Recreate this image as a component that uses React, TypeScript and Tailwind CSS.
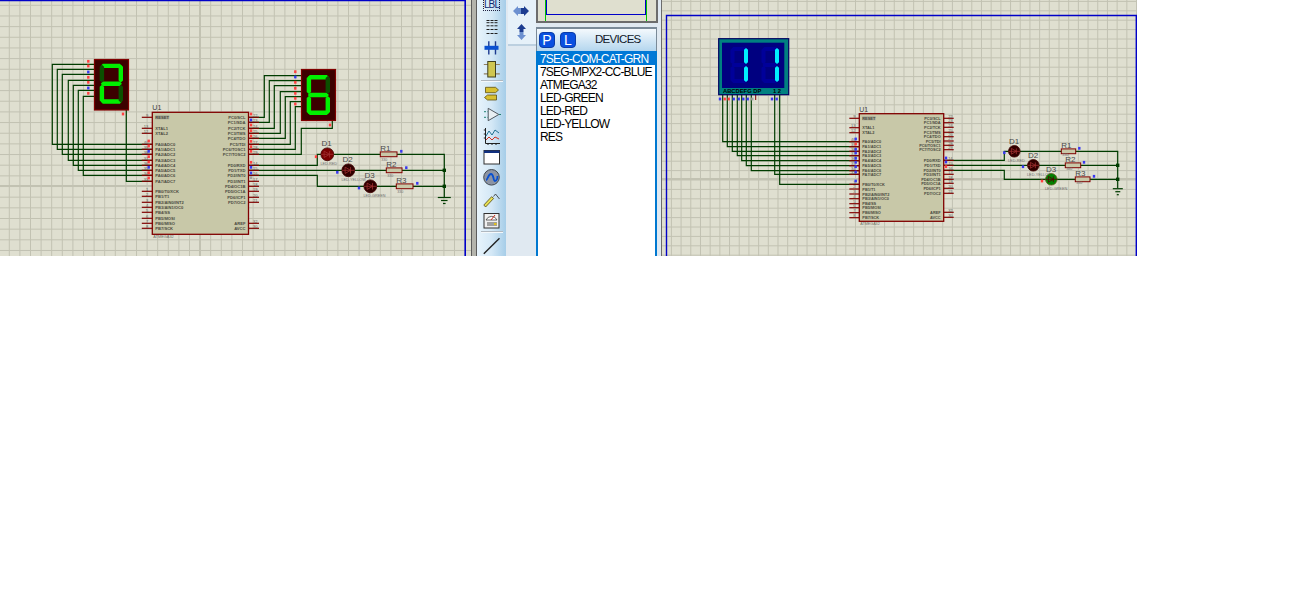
const SANS = "font-['Liberation_Sans',Arial,sans-serif]";
const WIRE = "#003c00";
const STUB = "#800000";

type Pin = [string, string, number];

const range = (from: number, to: number, step: number) => {
  const out: number[] = [];
  for (let v = from; v <= to; v += step) out.push(v);
  return out;
};

function Grid({ xs, ys, x0, x1 }: { xs: number[]; ys: number[]; x0: number; x1: number }) {
  return (
    <g>
      {xs.map((x) => (
        <line key={x} x1={x} x2={x} y1={0} y2={256} stroke="#c2c2b2" strokeWidth={1} />
      ))}
      {ys.map((y) => (
        <line key={y} y1={y} y2={y} x1={x0} x2={x1} stroke="#c2c2b2" strokeWidth={1} />
      ))}
    </g>
  );
}

function Wires({ paths }: { paths: string[] }) {
  return (
    <g fill="none" stroke={WIRE} strokeWidth={1.2}>
      {paths.map((d) => (
        <path key={d} d={d} />
      ))}
    </g>
  );
}

function Marks({ items }: { items: [number, number, string][] }) {
  const colors: Record<string, string> = { r: "#ff4040", b: "#3838f0", g: "#a0a0a0" };
  return (
    <g>
      {items.map(([x, y, c]) => (
        <rect key={`${x}-${y}`} x={x - 1.2} y={y - 1.4} width={2.4} height={2.8} fill={colors[c]} />
      ))}
    </g>
  );
}

function Chip({ x, y, w, h, stub, left, right, fs }: { x: number; y: number; w: number; h: number; stub: number; left: Pin[]; right: Pin[]; fs: number }) {
  return (
    <g className={SANS}>
      {left.map(([, , py]) => (
        <line key={py} x1={x - stub} x2={x} y1={py} y2={py} stroke={STUB} strokeWidth={1.2} />
      ))}
      {right.map(([, , py]) => (
        <line key={py} x1={x + w} x2={x + w + stub} y1={py} y2={py} stroke={STUB} strokeWidth={1.2} />
      ))}
      <rect x={x} y={y} width={w} height={h} fill="#c8c8a8" stroke={STUB} strokeWidth={1.3} />
      <rect x={x + 3} y={left[0][2] - 2} width={fs * 3.4} height={4} fill="#a8a898" />
      <text x={x} y={y - 2} fontSize={fs + 3} fill="#404040">U1</text>
      <text x={x + 1} y={y + h + 3.6} fontSize={fs - 0.2} fill="#707068">ATMEGA32</text>
      {left.map(([label, num, py]) => (
        <g key={label} fontSize={fs} fontWeight={700} fill="#4a4a40">
          <text x={x + 3} y={py + 1.6}>{label}</text>
          <text x={x - 4} y={py - 0.6} textAnchor="end" fontWeight={400} fill="#606058">{num}</text>
        </g>
      ))}
      {right.map(([label, num, py]) => (
        <g key={label} fontSize={fs} fontWeight={700} fill="#4a4a40">
          <text x={x + w - 3} y={py + 1.6} textAnchor="end">{label}</text>
          <text x={x + w + 4.5} y={py - 0.6} fontWeight={400} fill="#606058">{num}</text>
        </g>
      ))}
    </g>
  );
}

function Led({ x, y, r, fill, label, name }: { x: number; y: number; r: number; fill: string; label: string; name: string }) {
  const s = r * 0.5;
  return (
    <g className={SANS}>
      <circle cx={x} cy={y} r={r} fill={fill} stroke={fill === "#008000" ? "#606020" : "#400000"} strokeWidth={0.8} />
      <path d={`M${x - s} ${y - s}L${x + s * 0.7} ${y}L${x - s} ${y + s}Z M${x + s * 0.7} ${y - s}V${y + s} M${x - r} ${y}H${x + r}`} fill="none" stroke={fill === "#008000" ? "#500000" : "#a03030"} strokeWidth={0.8} />
      <text x={x - r + 0.5} y={y - r - 1.6} fontSize={8} fill="#484848">{name}</text>
      <text x={x - r - 0.5} y={y + r + 4.5} fontSize={3.8} fill="#707070">{label}</text>
    </g>
  );
}

function Res({ x, y, w, name, low }: { x: number; y: number; w: number; name: string; low: number }) {
  return (
    <g className={SANS}>
      <rect x={x} y={y - 2.4} width={w} height={4.8} fill="#c8c8a8" stroke={STUB} strokeWidth={1} />
      <text x={x} y={y - 3.2} fontSize={8} fill="#484848">{name}</text>
      <text x={x + 1} y={y + low} fontSize={3.6} fill="#707070">330</text>
    </g>
  );
}

function Ground({ x, y, w }: { x: number; y: number; w: number }) {
  return (
    <g stroke={WIRE} strokeWidth={1.2}>
      <line x1={x - w} x2={x + w} y1={y} y2={y} />
      <line x1={x - w * 0.5} x2={x + w * 0.5} y1={y + 3} y2={y + 3} />
      <line x1={x - w * 0.2} x2={x + w * 0.2} y1={y + 6} y2={y + 6} />
    </g>
  );
}

// seven segment glyph, segments a-g keyed by letter
function Seg({ x, y, w, h, t, on, lit, off }: { x: number; y: number; w: number; h: number; t: number; on: string; lit: string; off: string }) {
  const mid = y + h / 2;
  const i = t * 0.7;
  const p = t * 0.25;
  const bar = (top: number) =>
    `M${x + i} ${top}H${x + w - i}L${x + w - p} ${top + t / 2}L${x + w - i} ${top + t}H${x + i}L${x + p} ${top + t / 2}Z`;
  const post = (lx: number, from: number, to: number) =>
    `M${lx} ${from + i}L${lx + t / 2} ${from + p}L${lx + t} ${from + i}V${to - i}L${lx + t / 2} ${to - p}L${lx} ${to - i}Z`;
  const segs: Record<string, string> = {
    a: bar(y),
    g: bar(mid - t / 2),
    d: bar(y + h - t),
    f: post(x, y, mid),
    b: post(x + w - t, y, mid),
    e: post(x, mid, y + h),
    c: post(x + w - t, mid, y + h),
  };
  return (
    <g>
      {Object.keys(segs).map((k) => (
        <path key={k} d={segs[k]} fill={on.includes(k) ? lit : off} />
      ))}
    </g>
  );
}

const leftChipLeft: Pin[] = [
  ["RESET", "9", 117.3], ["XTAL1", "13", 128.3], ["XTAL2", "12", 133.3],
  ["PA0/ADC0", "40", 144.3], ["PA1/ADC1", "39", 149.3], ["PA2/ADC2", "38", 154.3], ["PA3/ADC3", "37", 160.3],
  ["PA4/ADC4", "36", 165.3], ["PA5/ADC5", "35", 170.3], ["PA6/ADC6", "34", 175.3], ["PA7/ADC7", "33", 181.3],
  ["PB0/T0/XCK", "1", 191.3], ["PB1/T1", "2", 196.3], ["PB2/AIN0/INT2", "3", 202.3], ["PB3/AIN1/OC0", "4", 207.3],
  ["PB4/SS", "5", 212.3], ["PB5/MOSI", "6", 218.3], ["PB6/MISO", "7", 223.3], ["PB7/SCK", "8", 228.3],
];
const leftChipRight: Pin[] = [
  ["PC0/SCL", "22", 117.3], ["PC1/SDA", "23", 122.3], ["PC2/TCK", "24", 128.3], ["PC3/TMS", "25", 133.3],
  ["PC4/TDO", "26", 138.3], ["PC5/TDI", "27", 144.3], ["PC6/TOSC1", "28", 149.3], ["PC7/TOSC2", "29", 154.3],
  ["PD0/RXD", "14", 165.3], ["PD1/TXD", "15", 170.3], ["PD2/INT0", "16", 175.3], ["PD3/INT1", "17", 181.3],
  ["PD4/OC1B", "18", 186.3], ["PD5/OC1A", "19", 191.3], ["PD6/ICP1", "20", 197.3], ["PD7/OC2", "21", 202.3],
  ["AREF", "32", 223.3], ["AVCC", "30", 228.3],
];
const rightChipLeftY = [118.3, 127.7, 132.7, 141.7, 146.7, 151.3, 155.7, 160.7, 165.7, 170.7, 174.3, 184.3, 189, 194, 198.7, 203.7, 207.7, 212.7, 217.7];
const rightChipRightY = [118.3, 122.7, 127.3, 132.3, 136.7, 141, 145.3, 149.7, 160.3, 165.3, 170.3, 174.3, 179.3, 183.3, 188.3, 193.3, 212.3, 217.3];
const rightChipLeft: Pin[] = leftChipLeft.map(([l, n], i) => [l, n, rightChipLeftY[i]]);
const rightChipRight: Pin[] = leftChipRight.map(([l, n], i) => [l, n, rightChipRightY[i]]);

function LeftSchematic() {
  const d1X = [52.3, 57.3, 62.3, 68.3, 73.3, 78.3, 83.3];
  const d1Top = [64.3, 69.3, 74.3, 80.3, 85.3, 90.3, 96.3];
  const d1Bot = [144.3, 149.3, 154.3, 160.3, 165.3, 170.3, 175.3];
  const d2X = [264.3, 269.3, 274.3, 280.3, 285.3, 290.3, 295.3];
  const d2Top = [75.7, 80.7, 85.7, 91.7, 96.7, 101.7, 106.7];
  const d2Bot = [117.3, 122.3, 128.3, 133.3, 138.3, 144.3, 149.3];
  return (
    <svg viewBox="0 0 471 256" className="w-[471px] h-[256px] block">
      <Grid xs={range(9.3, 465, 10.6)} ys={range(5.3, 256, 10.66)} x0={0} x1={471} />
      <line x1={200} x2={200} y1={0} y2={256} stroke="#c2c2b2" strokeWidth={2} />
      <line y1={186} y2={186} x1={0} x2={471} stroke="#c2c2b2" strokeWidth={2} />
      <path d="M0 0.5H465.2V256" fill="none" stroke="#0000c8" strokeWidth={1.6} />
      <Wires
        paths={[
          ...d1X.map((x, i) => `M94 ${d1Top[i]}H${x}V${d1Bot[i]}H152`),
          "M126.3 110V181.3H152",
          ...d2X.map((x, i) => `M301 ${d2Top[i]}H${x}V${d2Bot[i]}H249`),
          "M332.3 120.7V128.3H301.3V154.3H249",
          "M249 165.3H317.3V154.3H444.3V197",
          "M249 170.3H444.3",
          "M249 175.3H317.3V186.3H444.3",
        ]}
      />
      <rect x={94.5} y={59.5} width={34} height={50.5} fill="#3c0000" stroke={STUB} strokeWidth={1.2} />
      <Seg x={99.7} y={63.7} w={23.3} h={40} t={4.4} on="abged" lit="#00f000" off="#0c5000" />
      <rect x={301.5} y={69.5} width={34} height={51} fill="#3c0000" stroke={STUB} strokeWidth={1.2} />
      <Seg x={306.7} y={75} w={23.3} h={40} t={4.4} on="afgedc" lit="#00f000" off="#0c5000" />
      <Chip x={152.3} y={112.3} w={96.2} h={122} stub={10.5} left={leftChipLeft} right={leftChipRight} fs={4.1} />
      <Res x={380.3} y={154.3} w={16.7} name="R1" low={6.5} />
      <Res x={386.3} y={170.3} w={15.7} name="R2" low={6.5} />
      <Res x={396.3} y={186.3} w={16.7} name="R3" low={6.5} />
      <Led x={327.3} y={154.3} r={6.4} fill="#7a0000" name="D1" label="LED-RED" />
      <Led x={348.3} y={170.3} r={6.4} fill="#300000" name="D2" label="LED-YELLOW" />
      <Led x={370.3} y={186.3} r={6.4} fill="#300000" name="D3" label="LED-GREEN" />
      <rect x={442.6} y={168.6} width={3.4} height={3.4} fill={WIRE} />
      <rect x={442.6} y={184.6} width={3.4} height={3.4} fill={WIRE} />
      <Ground x={444.3} y={197.5} w={6.5} />
      <Marks
        items={[
          [88.3, 61.3, "r"], [88.3, 66, "r"], [88.3, 72, "b"], [88.3, 77.3, "r"], [88.3, 82.3, "r"], [88.3, 88, "b"], [88.3, 93.3, "r"], [123, 114, "r"],
          [148.7, 141, "r"], [148.7, 146, "r"], [148.7, 151.3, "b"], [148.7, 156.7, "r"], [148.7, 162, "r"], [148.7, 167.3, "b"], [148.7, 172.7, "r"], [148.7, 178, "r"],
          [251, 114, "r"], [251, 120, "b"], [251, 125, "r"], [251, 130.7, "r"], [251, 136, "r"], [251, 141.3, "r"], [251, 146.7, "r"], [251, 151.3, "r"],
          [251, 162.3, "r"], [251, 167.3, "b"], [251, 173, "b"], [251, 177.7, "g"],
          [295.3, 71.7, "r"], [295.3, 77, "b"], [295.3, 82.3, "r"], [295.3, 88.3, "r"], [295.3, 93.3, "r"], [295.3, 98.3, "r"], [295.3, 104, "r"], [330, 125, "r"],
          [316, 156.7, "r"], [337.3, 172.3, "b"], [359, 188, "b"], [401.3, 151.3, "b"], [406.3, 167.7, "b"], [417.3, 183.3, "b"],
        ]}
      />
    </svg>
  );
}

function RightSchematic() {
  const xs = [722.7, 727.3, 732.3, 737.3, 741.7, 746.3, 751.3, 774.7, 779.7];
  const ys = [141.7, 146.7, 151.3, 155.7, 160.7, 165.7, 170.7, 174.3, 184.3];
  return (
    <svg viewBox="662 0 475 256" className="w-[475px] h-[256px] block">
      <Grid xs={range(671.4, 1137, 9.69)} ys={range(1.4, 256, 9.4)} x0={662} x1={1137} />
      <line y1={179} y2={179} x1={662} x2={1137} stroke="#c2c2b2" strokeWidth={2} />
      <path d="M666.5 256V15.5H1136.3V256" fill="none" stroke="#0000c8" strokeWidth={1.4} />
      <Wires
        paths={[
          ...xs.map((x, i) => `M${x} 94V${ys[i]}H860`),
          "M943 160.3H1004.3V151.3H1117.7V188",
          "M943 165.3H1117.7",
          "M943 170.3H1004.3V179.3H1117.7",
        ]}
      />
      <line x1={755.7} x2={755.7} y1={94} y2={100} stroke={STUB} />
      <rect x={718.7} y={38.7} width={70} height={56} fill="#008080" stroke="#000060" strokeWidth={1.2} />
      <rect x={722} y={42.7} width={62.3} height={45.3} fill="#000080" />
      <Seg x={730.5} y={47} w={17.5} h={36} t={4} on="bc" lit="#00f0ff" off="#00009a" />
      <Seg x={761.5} y={47} w={17.5} h={36} t={4} on="bc" lit="#00f0ff" off="#00009a" />
      <text x={723} y={93} fontSize={5.8} fontWeight={700} fill="#000000" className={SANS}>ABCDEFG DP</text>
      <text x={773} y={93} fontSize={5.8} fontWeight={700} fill="#000000" className={SANS}>1 2</text>
      <Chip x={859.3} y={113.7} w={84.4} h={107.6} stub={10} left={rightChipLeft} right={rightChipRight} fs={3.9} />
      <Res x={1061.3} y={151.3} w={14.4} name="R1" low={5} />
      <Res x={1065.3} y={165.3} w={15.4} name="R2" low={5} />
      <Res x={1075.3} y={179.3} w={14.7} name="R3" low={5} />
      <Led x={1014.3} y={151.3} r={5.8} fill="#300000" name="D1" label="LED-RED" />
      <Led x={1033.3} y={165.3} r={5.8} fill="#300000" name="D2" label="LED-YELLOW" />
      <Led x={1051.3} y={179.3} r={5.8} fill="#008000" name="D3" label="LED-GREEN" />
      <rect x={1116} y={163.6} width={3.4} height={3.4} fill={WIRE} />
      <rect x={1116} y={177.6} width={3.4} height={3.4} fill={WIRE} />
      <Ground x={1117.8} y={188.7} w={5} />
      <Marks
        items={[
          [720, 99, "b"], [724.7, 99, "r"], [728.7, 99, "r"], [733.7, 99, "b"], [738.7, 99, "b"], [743.3, 99, "b"], [747.7, 99, "b"], [752.3, 99, "g"], [772, 99, "b"], [776.7, 99, "b"],
          [855.7, 139, "b"], [855.7, 144, "r"], [855.7, 149.3, "b"], [855.7, 153, "b"], [855.7, 158.3, "b"], [855.7, 162.3, "b"], [855.7, 166.7, "b"], [855.7, 172, "b"], [855.7, 181, "b"],
          [946, 158, "b"], [946, 162, "b"], [946, 166.7, "r"],
          [1004.3, 152.7, "b"], [1023, 166.7, "b"], [1042, 181, "r"], [1079.3, 148.3, "b"], [1084, 162.3, "b"], [1094, 176.3, "b"],
        ]}
      />
    </svg>
  );
}

function ToolIcon({ children }: { children: React.ReactNode }) {
  return (
    <svg viewBox="0 0 24 21" className="w-6 h-[21px] shrink-0">
      {children}
    </svg>
  );
}

function Separator() {
  return <div className="w-[22px] h-[2px] my-[1.25px] shrink-0 bg-[#f4f8fb] border-t border-[#b0b8c0]" />;
}

function Toolbar() {
  return (
    <div className="w-[29px] h-full shrink-0 flex flex-col items-center bg-gradient-to-r from-[#e8f4fc] via-[#d4e8f6] to-[#a6cde8] overflow-hidden">
      <div className="mt-[-5px] mb-[4.5px] w-[17px] h-4 shrink-0 border border-dotted border-[#202040] flex items-end justify-center text-[10px] leading-[10px] tracking-[-0.9px] text-[#102870] font-['Liberation_Sans',Arial,sans-serif]">
        LBL
      </div>
      <ToolIcon>
        <path d="M6.500 4.500h11M6.500 6.700h11M6.500 9.800h11M6.500 13.500h11M6.500 17.500h11" stroke="#202020" strokeWidth={1} strokeDasharray="3 1" />
      </ToolIcon>
      <ToolIcon>
        <path d="M8.800 4.200v13.300M15.500 4.200v13.300" stroke="#1c3a90" strokeWidth={1.4} />
        <rect x={4.500} y={8.800} width={14} height={4} fill="#0a50d0" />
      </ToolIcon>
      <ToolIcon>
        <path d="M3.800 6.500h16M3.800 15.800h16" stroke="#908060" strokeWidth={1.2} />
        <rect x={7.800} y={3.500} width={7.700} height={15.500} fill="#cfc650" stroke="#404020" />
      </ToolIcon>
      <Separator />
      <ToolIcon>
        <path d="M5.500 4.300h10l3 2.700-3 2.700h-10zM7.500 12h9v5h-9l-3-2.500z" fill="#d8c030" stroke="#605010" strokeWidth={0.8} />
      </ToolIcon>
      <ToolIcon>
        <path d="M8.200 4.300v12.400l10.600-6.200z" fill="#e8eef2" stroke="#505860" strokeWidth={1} />
        <path d="M4 7.700h3.500M4 13.300h3.500M19 10.500h3" stroke="#208070" strokeWidth={1} strokeDasharray="2 1" />
      </ToolIcon>
      <ToolIcon>
        <path d="M5.500 3v15.500h14.500M3.800 5h2M3.800 9h2M3.800 13h2M8 18v2M12 18v2M16 18v2" stroke="#202020" strokeWidth={1} fill="none" />
        <path d="M6 11l3-5 3 4 3-5 4 3" stroke="#207090" strokeWidth={1} fill="none" />
        <path d="M6 15l3-3 3 3 3-3 4 2" stroke="#d03020" strokeWidth={1} fill="none" />
      </ToolIcon>
      <ToolIcon>
        <rect x={4} y={4.500} width={15.500} height={13.500} fill="#ffffff" stroke="#303030" />
        <rect x={4} y={4.500} width={15.500} height={2.500} fill="#103080" />
      </ToolIcon>
      <ToolIcon>
        <circle cx={11.500} cy={10.300} r={7.800} fill="#8c94a4" stroke="#404850" />
        <path d="M6 13c2 0 2-6 5-6s2 7 4 7 2.500-4 2.500-5" fill="none" stroke="#0850d0" strokeWidth={1.8} />
      </ToolIcon>
      <ToolIcon>
        <path d="M3.800 17l1.800 2 8-8.500-2-1.800z" fill="#e8e050" stroke="#504818" strokeWidth={0.8} />
        <path d="M13.500 8.500l2-2.500 4 5" fill="none" stroke="#303030" strokeWidth={0.8} />
      </ToolIcon>
      <ToolIcon>
        <rect x={4} y={4.500} width={15} height={14.500} fill="#f0f0f0" stroke="#303030" />
        <path d="M6 11a6 6 0 0 1 11 0z" fill="#ffffff" stroke="#404040" strokeWidth={0.8} />
        <path d="M11 11l4-5" stroke="#d03020" />
        <rect x={7} y={13} width={10} height={4} fill="#a0a0a0" />
        <rect x={14} y={14} width={2.500} height={2} fill="#e0c020" />
      </ToolIcon>
      <Separator />
      <ToolIcon>
        <path d="M3.800 18.700L19.500 3.300" stroke="#202020" strokeWidth={1.4} />
      </ToolIcon>
    </div>
  );
}

function ModeColumn() {
  return (
    <div className="w-[30px] h-full shrink-0 bg-[#e0e9f1] flex flex-col">
      <div className="h-[46px] ml-[2px] shrink-0 bg-[#e6f1f9] border-b-2 border-[#bcd0e0] flex flex-col items-center pt-[5.500px] pr-[2px] gap-2">
        <svg viewBox="0 0 16 10" className="w-4 h-[10px]">
          <path d="M8 2H5V0L0 5l5 5V8h3z" fill="#6c90d0" />
          <path d="M8 2h3V0l5 5-5 5V8H8z" fill="#1c3c90" />
        </svg>
        <svg viewBox="0 0 9 16" className="w-[9px] h-4">
          <path d="M2.500 8V5H0L4.500 0 9 5H6.500V8z" fill="#1c3c90" />
          <path d="M2.500 8v3H0l4.500 5L9 11H6.500V8z" fill="#6c90d0" />
        </svg>
      </div>
    </div>
  );
}

function LogoButton({ label }: { label: string }) {
  return (
    <div className="w-4 h-4 rounded-[4px] bg-[#0a50e0] text-white text-[14px] leading-none flex items-center justify-center border border-[#0a3ca8]">
      {label}
    </div>
  );
}

function DevicesPanel() {
  const devices = ["7SEG-COM-CAT-GRN", "7SEG-MPX2-CC-BLUE", "ATMEGA32", "LED-GREEN", "LED-RED", "LED-YELLOW", "RES"];
  return (
    <div className={`w-[122px] h-full shrink-0 flex flex-col bg-[#e0e9f1] ${SANS}`}>
      <div className="h-[23px] shrink-0 bg-[#dfdfcf] border-x-2 border-b-2 border-[#6c6c6c] flex">
        <div className="ml-[7px] w-[102px] h-[21px] border-x border-[#00c000]">
          <div className="h-[15px] border-x border-b border-[#0000c8]" />
        </div>
      </div>
      <div className="h-[4px] shrink-0" />
      <div className="flex-1 mr-[1px] flex flex-col border-t-2 border-[#7a8a98] bg-white min-h-0">
        <div className="h-[22px] shrink-0 flex items-center gap-[5px] pl-[2px] border-x border-[#7a8a98] bg-gradient-to-b from-[#f4f9fd] to-[#b4d6ee]">
          <LogoButton label="P" />
          <LogoButton label="L" />
          <span className="ml-[14px] text-[11.500px] tracking-[-0.7px] text-[#101828]">DEVICES</span>
        </div>
        <ul className="flex-1 border-x-2 border-[#0078d0] text-[12px] leading-[15px] tracking-[-0.8px] text-black whitespace-nowrap overflow-hidden">
          {devices.map((name, i) => (
            <li key={name} className={i === 0 ? "h-[14px] pl-[2px] pt-[1px] bg-[#0078d7] text-white" : "h-[13px] pl-[2px]"}>
              {name}
            </li>
          ))}
        </ul>
      </div>
    </div>
  );
}

export default function App() {
  return (
    <div className="w-[1304px] h-[592px] bg-white overflow-hidden">
      <div className="flex h-[256px] w-[1137px]">
        <div className="w-[471px] h-full shrink-0 bg-[#dfdfd0]">
          <LeftSchematic />
        </div>
        <div className="w-[6px] h-full shrink-0 bg-[#b4b4ac] border-x border-[#5c5c5c]" />
        <Toolbar />
        <ModeColumn />
        <DevicesPanel />
        <div className="w-[4px] h-full shrink-0 bg-[#e0e9f1] border-r border-[#6c6c6c]" />
        <div className="w-[475px] h-full shrink-0 bg-[#dfdfd0]">
          <RightSchematic />
        </div>
      </div>
    </div>
  );
}
